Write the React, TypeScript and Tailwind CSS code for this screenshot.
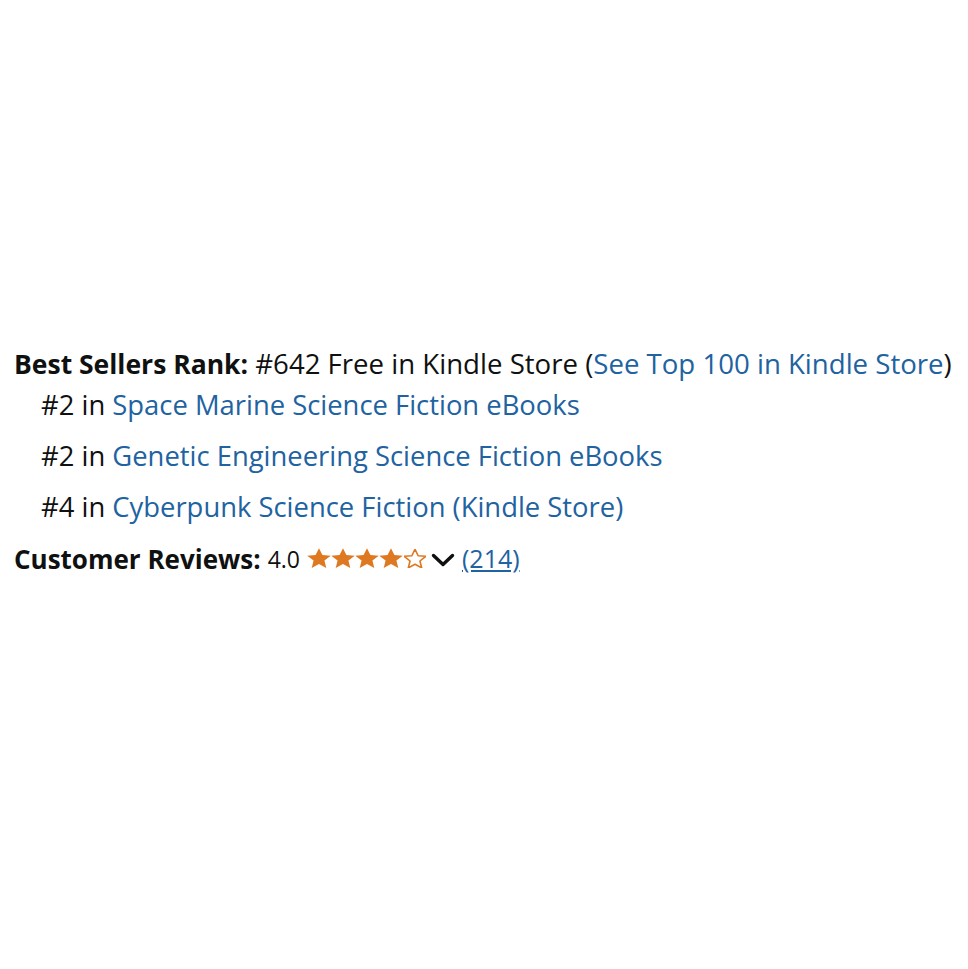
function Star({ filled }: { filled: boolean }) {
  return (
    <svg viewBox="1.8 2.3 20.4 19.2" preserveAspectRatio="none" className={filled ? "h-[20px] w-[24px]" : "h-[19px] w-[22px] mx-[1px]"}>
      <path
        d="M12 2.5l2.9 6.6 7.1.6-5.4 4.7 1.6 7-6.2-3.7-6.2 3.7 1.6-7L2 9.7l7.1-.6z"
        fill={filled ? "#de7921" : "none"}
        stroke="#de7921"
        strokeWidth={filled ? 0 : 1.5}
        strokeLinejoin="round"
      />
    </svg>
  );
}

function Chevron() {
  return (
    <svg viewBox="0 0 24 14" className="h-[14px] w-[24px]">
      <path d="M2.5 2.5l9.5 9 9.5-9" fill="none" stroke="#0f1111" strokeWidth={3.4} strokeLinecap="round" strokeLinejoin="round" />
    </svg>
  );
}

const ranks = [
  { n: "#2", label: "Space Marine Science Fiction eBooks" },
  { n: "#2", label: "Genetic Engineering Science Fiction eBooks" },
  { n: "#4", label: "Cyberpunk Science Fiction (Kindle Store)" },
];

export default function App() {
  return (
    <div className="h-[969px] w-[968px] bg-white px-[14px] pt-[345px] text-[#0f1111] font-['Open_Sans',sans-serif]">
      <div className="text-[27.6px] leading-[36px] whitespace-nowrap">
        <span className="font-bold text-[26.5px]">Best Sellers Rank:</span> #642 Free in Kindle Store (
        <a className="text-[#2162a1]">See Top 100 in Kindle Store</a>)
      </div>
      <ul className="pl-[27px]">
        {ranks.map((r, i) => (
          <li key={i} className="text-[27.4px] leading-[36px] mb-[15px] first:mt-[5px]">
            {r.n} in <a className="text-[#2162a1]">{r.label}</a>
          </li>
        ))}
      </ul>
      <div className="flex items-center">
        <span className="text-[26px] font-bold leading-[36px]">Customer Reviews:</span>
        <span className="ml-[7px] text-[23px]">4.0</span>
        <span className="ml-[7px] mt-[-1px] flex items-center">
          <Star filled />
          <Star filled />
          <Star filled />
          <Star filled />
          <Star filled={false} />
        </span>
        <span className="ml-[4px] mt-[3px] flex">
          <Chevron />
        </span>
        <a className="ml-[7px] text-[25px] text-[#2162a1] underline">(214)</a>
      </div>
    </div>
  );
}
